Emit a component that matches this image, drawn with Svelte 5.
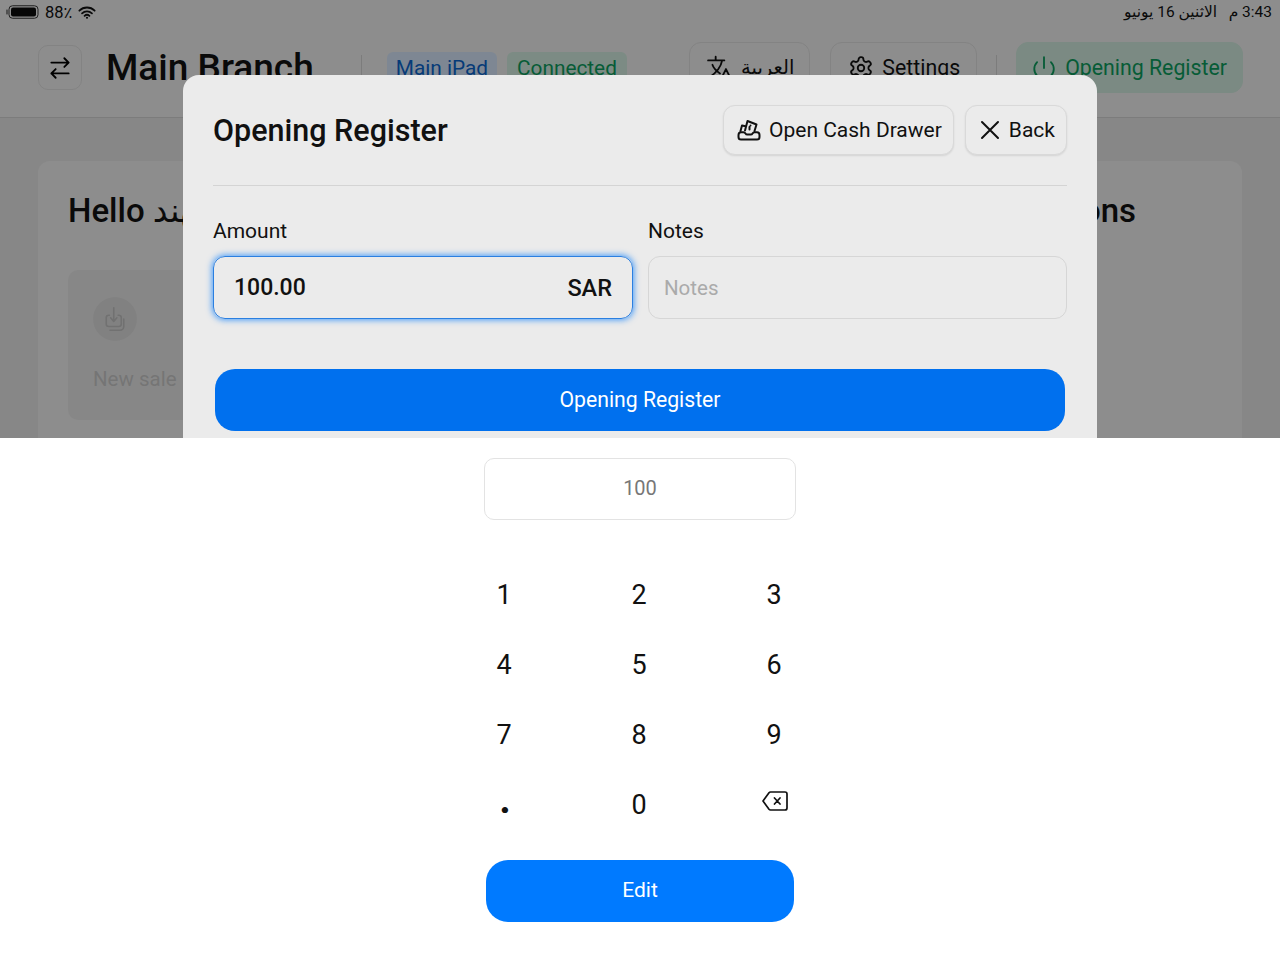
<script>
  const keys = ['1', '2', '3', '4', '5', '6', '7', '8', '9', '.', '0', 'back']
</script>

<div class="screen">
  <section class="app">
    <div class="statusbar">
      <div class="status-left">
        <svg class="battery" viewBox="0 0 33 14" width="33" height="14">
          <path d="M1 5v4" stroke="#222" fill="none" />
          <rect x="3" y="0.75" width="29" height="12.5" rx="3.5" fill="none" stroke="#333" />
          <rect x="5" y="2.5" width="25" height="9" rx="2" fill="#0a0a0a" />
        </svg>
        <span>88٪</span>
        <svg viewBox="0 0 20 14" width="18" height="13">
          <path d="M1.500 5a12 12 0 0 1 17 0M4.500 8a8 8 0 0 1 11 0M7.300 10.800a4 4 0 0 1 5.400 0" fill="none" stroke="#111" stroke-width="2" />
          <circle cx="10" cy="12.800" r="1.200" fill="#111" />
        </svg>
      </div>
      <div class="status-right" dir="rtl">3:43 م&nbsp;&nbsp; الاثنين 16 يونيو</div>
    </div>

    <header class="topbar">
      <button class="icon-btn" aria-label="Switch">
        <svg viewBox="0 0 24 24" width="26" height="26"><path d="M16 3l4 4-4 4M20 7H4M8 21l-4-4 4-4M4 17h16" /></svg>
      </button>
      <h1>Main Branch</h1>
      <span class="sep first"></span>
      <span class="chip blue">Main iPad</span>
      <span class="chip green">Connected</span>
      <div class="spacer"></div>
      <button class="top-btn lang">
        <svg viewBox="0 0 24 24" width="26" height="26"><path d="M1 5h15M8 1.500V5M14 5c-1 5-5 11-11 15M5 9c1 3 4 6 7 8M13 22l4.500-9 4.500 9M15 20h5" /></svg>
        <span>العربية</span>
      </button>
      <button class="top-btn settings">
        <svg viewBox="0 0 24 24" width="26" height="26">
          <path d="M12.220 2h-.44a2 2 0 0 0-2 2v.18a2 2 0 0 1-1 1.730l-.43.25a2 2 0 0 1-2 0l-.15-.08a2 2 0 0 0-2.730.73l-.22.38a2 2 0 0 0 .73 2.730l.15.1a2 2 0 0 1 1 1.720v.51a2 2 0 0 1-1 1.740l-.15.09a2 2 0 0 0-.73 2.730l.22.38a2 2 0 0 0 2.730.73l.15-.08a2 2 0 0 1 2 0l.43.25a2 2 0 0 1 1 1.730V20a2 2 0 0 0 2 2h.44a2 2 0 0 0 2-2v-.18a2 2 0 0 1 1-1.730l.43-.25a2 2 0 0 1 2 0l.15.08a2 2 0 0 0 2.730-.73l.22-.39a2 2 0 0 0-.73-2.730l-.15-.08a2 2 0 0 1-1-1.740v-.5a2 2 0 0 1 1-1.740l.15-.09a2 2 0 0 0 .73-2.730l-.22-.38a2 2 0 0 0-2.730-.73l-.15.08a2 2 0 0 1-2 0l-.43-.25a2 2 0 0 1-1-1.730V4a2 2 0 0 0-2-2z" />
          <circle cx="12" cy="12" r="3" />
        </svg>
        <span>Settings</span>
      </button>
      <span class="sep"></span>
      <button class="top-btn open">
        <svg viewBox="0 0 24 24" width="26" height="26"><path d="M12 2v10M18.400 6.600a9 9 0 1 1-12.770.04" /></svg>
        <span>Opening Register</span>
      </button>
    </header>

    <div class="page">
      <div class="card">
        <div class="card-head">
          <h2>Hello مهند</h2>
          <h2>Notifications</h2>
        </div>
        <div class="tile">
          <div class="tile-icon">
            <svg viewBox="0 0 24 24" width="30" height="30"><path d="M11 3v11M8.500 11l2.500 3 2.500-3M7.500 9H7a2 2 0 0 0-2 2v5a2 2 0 0 0 2 2h8a2 2 0 0 0 2-2v-5a2 2 0 0 0-2-2h-.5M8 21h8a3 3 0 0 0 3-3v-6" /></svg>
          </div>
          <div class="tile-label">New sale</div>
        </div>
      </div>
    </div>

    <div class="backdrop"></div>

    <div class="modal">
      <div class="modal-head">
        <h3>Opening Register</h3>
        <div class="modal-actions">
          <button class="ghost">
            <svg viewBox="0 0 26 24" width="26" height="24">
              <path d="M2.500 17c0-1.700 1-2.800 2.500-2.800h2.500c1 0 1.500.5 2 1.300.4.700 1 1 1.800 1h3.400c.8 0 1.400-.3 1.800-1 .5-.8 1-1.300 2-1.300H21c1.500 0 2.500 1.100 2.500 2.800v2c0 1.400-1 2.500-2.500 2.500H5c-1.500 0-2.500-1.100-2.500-2.500z" />
              <path d="M4.500 13l1.500-5.500 3.500.8M9 12.500l2.500-9.500 9 3.500-2 6.500M13.500 9v2.500M14.500 7.500h.01" />
            </svg>
            <span>Open Cash Drawer</span>
          </button>
          <button class="ghost">
            <svg viewBox="0 0 24 24" width="24" height="24"><path d="M4 4l16 16M20 4 4 20" /></svg>
            <span>Back</span>
          </button>
        </div>
      </div>
      <div class="fields">
        <div class="field">
          <label for="amount">Amount</label>
          <div class="input focused">
            <input id="amount" value="100.00" readonly />
            <span class="suffix">SAR</span>
          </div>
        </div>
        <div class="field">
          <label for="notes">Notes</label>
          <div class="input">
            <input id="notes" placeholder="Notes" />
          </div>
        </div>
      </div>
      <button class="primary">Opening Register</button>
    </div>
  </section>

  <section class="keyboard">
    <div class="display">100</div>
    <div class="keys">
      {#each keys as key}
        <button class="key" class:dot={key === '.'}>
          {#if key === 'back'}
            <svg class="backspace" viewBox="0 0 26 20" width="26" height="20"><path d="M8.500 1h14.500a2 2 0 0 1 2 2v14a2 2 0 0 1-2 2H8.500a2 2 0 0 1-1.500-.7L1 10l6-8.300A2 2 0 0 1 8.500 1zM12.500 7l5.500 6M18 7l-5.500 6" /></svg>
          {:else}
            {key}
          {/if}
        </button>
      {/each}
    </div>
    <button class="edit">Edit</button>
  </section>
</div>

<style>
  :global(body) {
    margin: 0;
    background: #fff;
  }

  .screen {
    width: 1280px;
    height: 960px;
    overflow: hidden;
    font-family: Roboto, "DejaVu Sans", sans-serif;
    color: #111;
  }

  button {
    font-family: inherit;
    padding: 0;
  }

  svg {
    flex: none;
  }

  svg path,
  svg circle {
    stroke-linecap: round;
    stroke-linejoin: round;
  }

  .app {
    position: relative;
    height: 438px;
    overflow: hidden;
    background: #e2e2e2;
  }

  .statusbar {
    height: 24px;
    display: flex;
    justify-content: space-between;
    align-items: center;
    padding: 0 8px 0 6px;
    font-size: 16.500px;
    background: #ececec;
  }

  .status-left {
    display: flex;
    align-items: center;
    gap: 6px;
  }

  .status-right {
    font-size: 15.500px;
  }

  .topbar {
    display: flex;
    align-items: center;
    padding: 18px 37px 24px 38px;
    background: #ececec;
    border-bottom: 1px solid #cfcfcf;
  }

  .icon-btn {
    width: 44px;
    height: 45px;
    display: flex;
    align-items: center;
    justify-content: center;
    border: 1px solid #dadada;
    border-radius: 10px;
    background: #ececec;
  }

  .topbar svg path,
  .topbar svg circle {
    fill: none;
    stroke: currentColor;
    stroke-width: 1.700;
  }

  h1 {
    margin: 0 0 0 24px;
    font-size: 37px;
    font-weight: 500;
    line-height: 46px;
  }

  .sep {
    width: 1px;
    height: 26px;
    margin: 0 19px;
    background: #cfcfcf;
  }

  .sep.first {
    margin: 0 25px 0 47px;
  }

  .chip {
    height: 32px;
    padding: 0 10px;
    margin-right: 10px;
    display: flex;
    align-items: center;
    border-radius: 6px;
    font-size: 20.800px;
  }

  .chip.blue {
    padding: 0 9px;
    color: #0b63c8;
    background: #d2e2f5;
  }

  .chip.green {
    color: #0c9a5c;
    background: #cfe8dc;
  }

  .spacer {
    flex: 1;
  }

  .top-btn {
    height: 51px;
    padding: 0 15px 0 17px;
    margin-left: 20px;
    display: flex;
    align-items: center;
    gap: 8px;
    font-size: 21.300px;
    color: #111;
    background: #ececec;
    border: 1px solid #dadada;
    border-radius: 12px;
  }

  .top-btn.lang {
    margin-left: 0;
    font-size: 19.500px;
  }

  .top-btn.settings {
    padding-right: 16px;
  }

  .top-btn.open {
    margin-left: 0;
    padding: 0 15px 0 14px;
    color: #0c9a5c;
    background: #cde6da;
    border-color: #cde6da;
  }

  .page {
    padding: 43px 38px 0;
  }

  .card {
    height: 300px;
    padding: 30px;
    border-radius: 12px;
    background: #ebebeb;
  }

  .card-head {
    display: flex;
    justify-content: space-between;
    padding-right: 76px;
  }

  h2 {
    margin: 0;
    font-size: 33px;
    line-height: 40px;
    font-weight: 500;
  }

  .tile {
    width: 340px;
    height: 150px;
    margin-top: 39px;
    padding: 27px 25px;
    box-sizing: border-box;
    border-radius: 10px;
    background: #e2e2e2;
  }

  .tile-icon {
    width: 44px;
    height: 44px;
    display: flex;
    align-items: center;
    justify-content: center;
    border-radius: 50%;
    background: #d8d8d8;
  }

  .tile-icon path {
    fill: none;
    stroke: #bcbcbc;
    stroke-width: 1.300;
  }

  .tile-label {
    margin-top: 26px;
    font-size: 20.500px;
    color: #c4c4c4;
  }

  .backdrop {
    position: absolute;
    inset: 0;
    background: rgba(0, 0, 0, 0.4);
  }

  .modal {
    position: absolute;
    top: 75px;
    left: 183px;
    width: 914px;
    height: 420px;
    box-sizing: border-box;
    padding: 30px;
    border-radius: 16px;
    background: #ebebeb;
  }

  .modal-head {
    display: flex;
    justify-content: space-between;
    align-items: center;
    padding-bottom: 30px;
    border-bottom: 1px solid #d4d4d4;
  }

  h3 {
    margin: 0;
    font-size: 30.500px;
    font-weight: 500;
  }

  .modal-actions {
    display: flex;
    gap: 11px;
  }

  .ghost {
    height: 50px;
    padding: 0 11px 0 12px;
    display: flex;
    align-items: center;
    gap: 7px;
    font-size: 21px;
    color: #111;
    background: #ebebeb;
    border: 1px solid #d9d9d9;
    border-radius: 12px;
    box-shadow: 0 1px 2px rgba(0, 0, 0, 0.1);
  }

  .ghost path {
    fill: none;
    stroke: #111;
    stroke-width: 2;
  }

  .fields {
    display: grid;
    grid-template-columns: 420px 419px;
    gap: 15px;
    margin-top: 30px;
  }

  label {
    display: block;
    font-size: 21px;
    line-height: 30px;
    margin-bottom: 10px;
  }

  .input {
    height: 63px;
    box-sizing: border-box;
    display: flex;
    align-items: center;
    padding: 0 15px;
    border: 1px solid #d6d6d6;
    border-radius: 12px;
  }

  .input.focused {
    padding: 0 20px;
    border: 1.500px solid #2b7fe0;
    box-shadow: 0 0 6px 1px rgba(0, 122, 255, 0.7);
  }

  input {
    flex: 1;
    min-width: 0;
    border: 0;
    padding: 0;
    outline: 0;
    background: transparent;
    font: inherit;
    font-size: 20.500px;
    color: #111;
  }

  input::placeholder {
    color: #aaa;
  }

  .focused input {
    font-size: 23px;
    font-weight: 500;
  }

  .suffix {
    font-size: 23.500px;
    font-weight: 500;
  }

  .primary {
    display: block;
    width: 850px;
    height: 62px;
    margin: 50px 2px 0;
    padding-bottom: 2px;
    border: 0;
    border-radius: 20px;
    background: #0070ee;
    color: #fff;
    font-size: 21.200px;
  }

  .keyboard {
    display: flex;
    flex-direction: column;
    align-items: center;
    padding-top: 20px;
  }

  .display {
    width: 312px;
    height: 62px;
    box-sizing: border-box;
    display: flex;
    align-items: center;
    justify-content: center;
    padding-bottom: 2px;
    border: 1px solid #e3e3e3;
    border-radius: 10px;
    font-size: 20px;
    color: #777;
  }

  .keys {
    width: 310px;
    margin-top: 40px;
    margin-right: 2px;
    display: grid;
    grid-template-columns: repeat(3, 40px);
    grid-auto-rows: 70px;
    justify-content: space-between;
  }

  .key {
    border: 0;
    background: none;
    font-size: 27px;
    color: #111;
    display: flex;
    align-items: center;
    justify-content: center;
  }

  .key.dot {
    font-weight: 700;
    font-size: 40px;
    padding: 0 0 12px 2px;
  }

  .backspace {
    margin-bottom: 8px;
    margin-left: 2px;
  }

  .key path {
    fill: none;
    stroke: #111;
    stroke-width: 1.700;
  }

  .edit {
    width: 308px;
    height: 62px;
    margin-top: 20px;
    padding-bottom: 2px;
    border: 0;
    border-radius: 22px;
    background: #007aff;
    color: #fff;
    font-size: 21px;
  }
</style>
